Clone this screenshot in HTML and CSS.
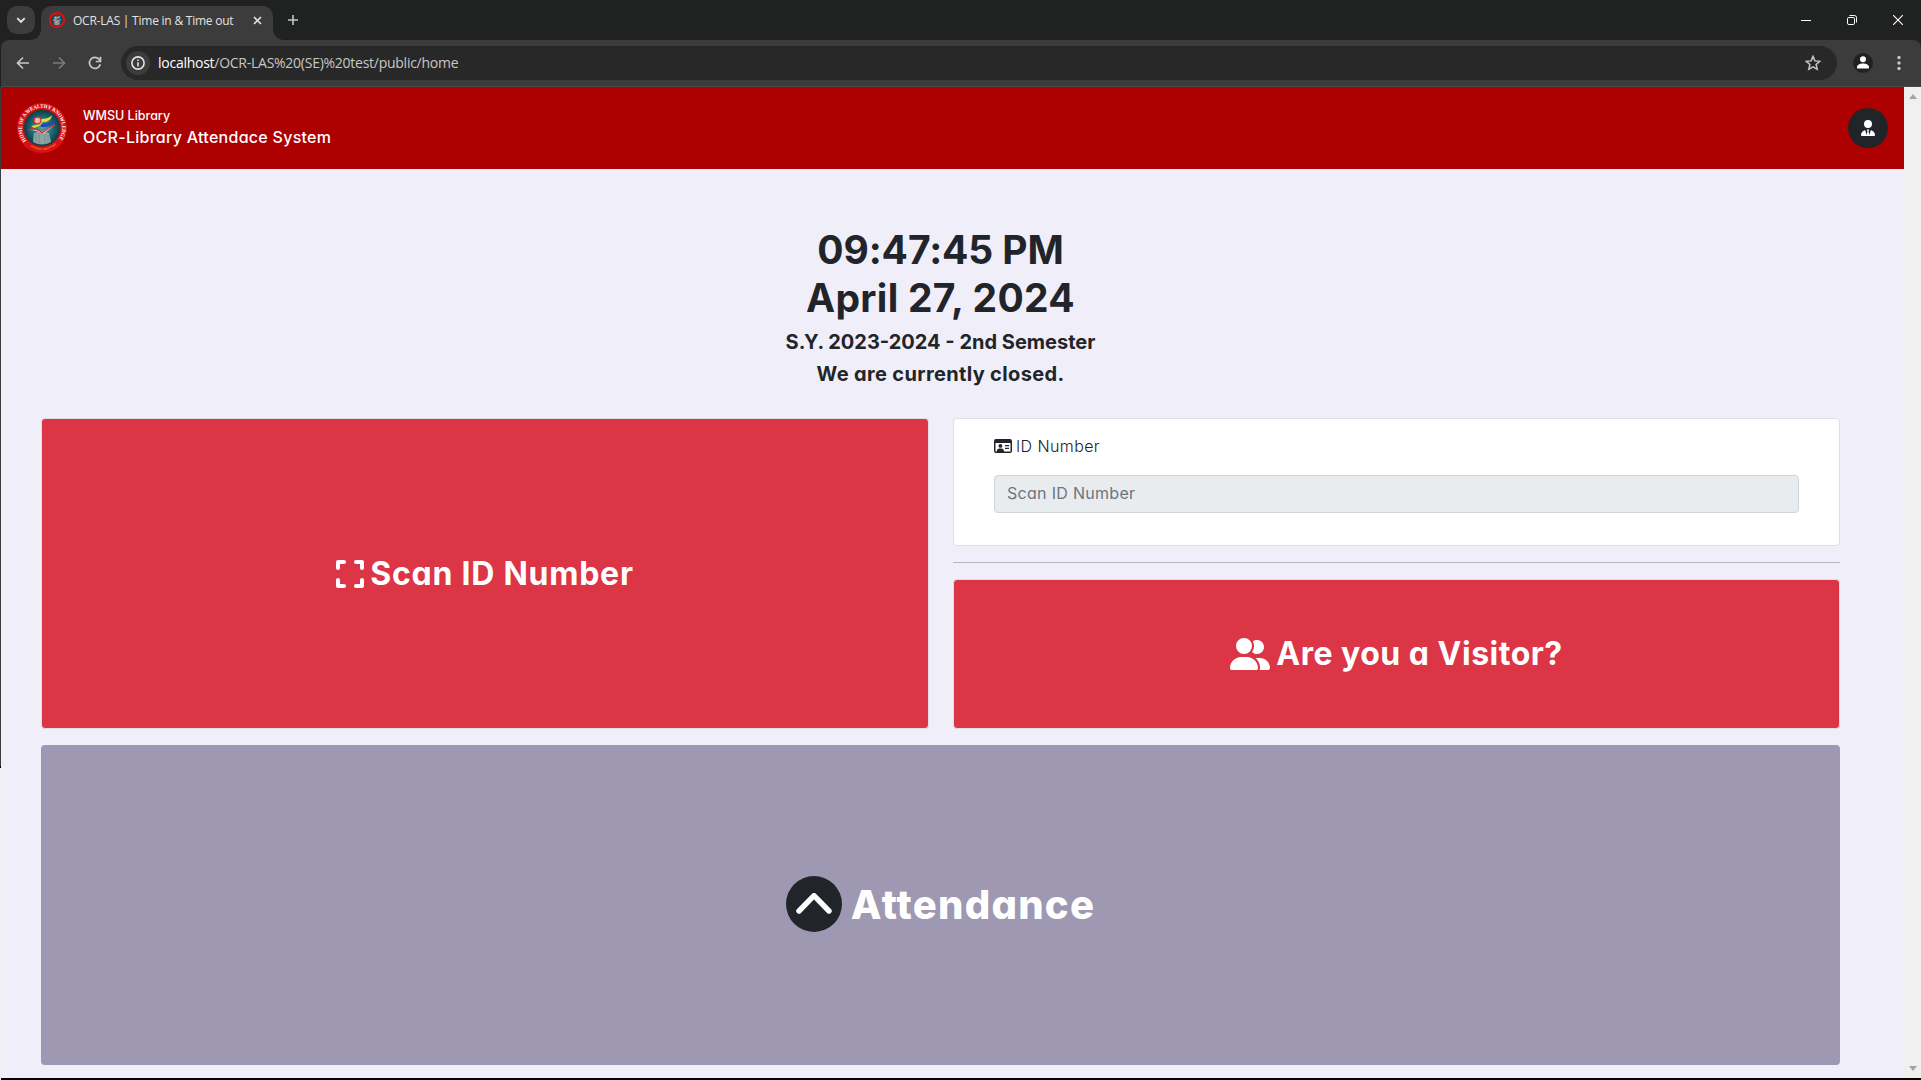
FILE: index.html
```html
<!DOCTYPE html>
<html lang="en">
<head>
<meta charset="utf-8">
<title>OCR-LAS | Time in &amp; Time out</title>
<link rel="stylesheet" href="styles.css">
</head>
<body>
<div class="browser">
  <div class="tabstrip">
    <div class="tab-search"><svg width="10" height="7" viewBox="0 0 10 7"><path d="M1.3 1.2 5 4.9l3.7-3.7" fill="none" stroke="#e3e3e3" stroke-width="1.9"/></svg></div>
    <div class="tab">
      <svg class="favicon" width="16" height="16" viewBox="0 0 50 50"><use href="#seal"/></svg>
      <span class="tab-title">OCR-LAS | Time in &amp; Time out</span>
      <svg class="tab-close" width="9" height="9" viewBox="0 0 9 9"><path d="m1 1 7 7M8 1 1 8" stroke="#e3e3e3" stroke-width="1.6"/></svg>
    </div>
    <svg class="new-tab" width="10" height="10" viewBox="0 0 10 10"><path d="M5 0v10M0 5h10" stroke="#c7c7c7" stroke-width="1.6"/></svg>
    <div class="window-buttons">
      <svg width="10" height="10" viewBox="0 0 10 10"><path d="M0 5.5h10" stroke="#fff"/></svg>
      <svg width="10" height="10" viewBox="0 0 10 10" fill="none" stroke="#fff"><rect x=".5" y="2.5" width="7" height="7" rx="1.3"/><path d="M2.5.5h5a2 2 0 0 1 2 2v5"/></svg>
      <svg width="10" height="10" viewBox="0 0 10 10"><path d="m0 0 10 10M10 0 0 10" stroke="#fff" stroke-width="1.1"/></svg>
    </div>
  </div>
  <div class="toolbar">
    <svg class="nav" width="14" height="14" viewBox="0 0 14 14"><path d="M13 7H2M7 1.5 1.5 7 7 12.5" fill="none" stroke="#c7c7c7" stroke-width="1.7"/></svg>
    <svg class="nav" width="14" height="14" viewBox="0 0 14 14"><path d="M1 7h11M7 1.5 12.5 7 7 12.5" fill="none" stroke="#7b7b7b" stroke-width="1.7"/></svg>
    <svg class="nav" width="14" height="14" viewBox="0 0 14 14"><path d="M12.3 8.3A5.5 5.5 0 1 1 11.2 3.4L12.5 5" fill="none" stroke="#c7c7c7" stroke-width="1.7"/><path d="M12.5.8v4.7H7.8" fill="none" stroke="#c7c7c7" stroke-width="1.7"/></svg>
    <div class="omnibox">
      <div class="site-info"><svg width="14" height="14" viewBox="0 0 14 14"><circle cx="7" cy="7" r="6.1" fill="none" stroke="#e3e3e3" stroke-width="1.6"/><path d="M7 6.2v4.2M7 3.5v1.5" stroke="#e3e3e3" stroke-width="1.6"/></svg></div>
      <span class="url"><b>localhost</b>/OCR-LAS%20(SE)%20test/public/home</span>
      <svg class="star" width="16" height="16" viewBox="0 0 16 16"><path d="m8 1.4 1.9 4.5 4.9.4-3.7 3.2 1.1 4.8L8 11.8l-4.2 2.5 1.1-4.8L1.2 6.3l4.9-.4z" fill="none" stroke="#c7c7c7" stroke-width="1.5"/></svg>
    </div>
    <div class="profile"><svg width="12" height="13" viewBox="0 0 12 13" fill="#fff"><circle cx="6" cy="3.2" r="3"/><path d="M0 12.500v-1.300C0 8.800 3 7.600 6 7.600s6 1.200 6 3.600v1.300z"/></svg></div>
    <svg class="menu" width="4" height="16" viewBox="0 0 4 16" fill="#c7c7c7"><circle cx="2" cy="2.5" r="1.7"/><circle cx="2" cy="8" r="1.7"/><circle cx="2" cy="13.5" r="1.7"/></svg>
  </div>
</div>

<div class="viewport">
  <div class="edge"></div>
  <div class="page">
    <header class="site-header">
      <svg class="logo" width="50" height="50" viewBox="0 0 50 50">
        <defs>
          <radialGradient id="sea"><stop offset="0" stop-color="#4f9fa5"/><stop offset=".6" stop-color="#1d6874"/><stop offset="1" stop-color="#0b3b48"/></radialGradient>
          <path id="ring" d="M9.400 37.600A20.100 20.100 0 1 1 40.600 37.600"/>
          <path id="ring-low" d="M10.500 41.200A22 22 0 0 0 39.500 41.200"/>
          <g id="seal">
            <circle cx="25" cy="25" r="25" fill="#dc1013"/>
            <circle cx="25" cy="25" r="18.3" fill="url(#sea)" stroke="#7c2228" stroke-width=".8"/>
            <path d="M17 30q8-3 15 0l2 9q-9 5-18 0z" fill="#8fa3a2"/>
            <path d="M19 31v8M22 30v11M28 31v10M31 32v7" stroke="#6f8587" stroke-width=".8"/>
            <path d="M24 16q8 0 11-4-1 8-11 7z" fill="#e6dc37"/>
            <path d="M23 20q9 2 16-4-4 9-15 8z" fill="#2346b8"/>
            <path d="M14 23q10-2 12-6 0 6-9 8z" fill="#d9d53c"/>
            <path d="M12 27q8-3 13 2 5-4 13-7l-12 9q-6-4-14-4z" fill="#e9ddd9"/>
            <path d="M11 27q9-3 14 3 6-5 13-8" fill="none" stroke="#d92d2d" stroke-width="1.3"/>
            <circle cx="20.5" cy="17.5" r="3.4" fill="#eeb5b3" stroke="#d32b34" stroke-width="1.2"/>
          </g>
        </defs>
        <use href="#seal"/>
        <text class="seal-text"><textPath href="#ring" textLength="88" lengthAdjust="spacingAndGlyphs">HOME OF A WEALTHY KNOWLEDGE</textPath></text>
        <text class="seal-motto"><textPath href="#ring-low" startOffset="4">Scribimus Opus Populus</textPath></text>
      </svg>
      <div class="brand">
        <span class="brand-small">WMSU Library</span>
        <span class="brand-name">OCR-Library Attendace System</span>
      </div>
      <div class="account"><svg width="14" height="16" viewBox="0 0 448 512" fill="#fff"><path d="M96 128a128 128 0 1 0 256 0A128 128 0 1 0 96 128zm94.500 200.200l18.600 31L175.800 483.100l-36-146.900c-2-8.100-9.800-13.400-17.900-11.300C51.900 342.400 0 405.800 0 481.300c0 17 13.800 30.700 30.700 30.700H417.300c17 0 30.700-13.800 30.700-30.700c0-75.500-51.900-138.900-121.900-156.400c-8.100-2-15.900 3.300-17.900 11.300l-36 146.900L238.900 359.200l18.600-31c6.400-10.700-1.300-24.200-13.700-24.200H204.300c-12.400 0-20.100 13.600-13.700 24.200z"/></svg></div>
    </header>
    <main class="content">
      <div class="status">
        <h1 class="clock">09:47:45 PM</h1>
        <h1 class="clock date">April 27, 2024</h1>
        <h2 class="term">S.Y. 2023-2024 - 2nd Semester</h2>
        <h2 class="notice">We are currently closed.</h2>
      </div>
      <div class="panels">
        <div class="card action scan">
          <svg width="28" height="32" viewBox="0 0 448 512" fill="#fff"><path d="M32 32C14.300 32 0 46.300 0 64v96c0 17.700 14.300 32 32 32s32-14.300 32-32V96h64c17.700 0 32-14.300 32-32s-14.300-32-32-32H32zM64 352c0-17.700-14.300-32-32-32s-32 14.300-32 32v96c0 17.700 14.300 32 32 32h96c17.700 0 32-14.300 32-32s-14.300-32-32-32H64V352zM320 32c-17.700 0-32 14.300-32 32s14.300 32 32 32h64v64c0 17.700 14.300 32 32 32s32-14.300 32-32V64c0-17.700-14.300-32-32-32H320zM448 352c0-17.700-14.300-32-32-32s-32 14.300-32 32v64H320c-17.700 0-32 14.300-32 32s14.300 32 32 32h96c17.700 0 32-14.300 32-32V352z"/></svg>
          <span>Scan ID Number</span>
        </div>
        <div class="side">
          <div class="card entry">
            <label class="entry-label" for="idnum">
              <svg width="18" height="14" viewBox="0 0 18 14" fill="#212529"><path fill-rule="evenodd" d="M2 0h14a2 2 0 0 1 2 2v10a2 2 0 0 1-2 2H2a2 2 0 0 1-2-2V2a2 2 0 0 1 2-2zM1.500 4v8.500h1.300c0-2 1-3 2.500-3H7.500c1.500 0 2.500 1 2.500 3h6.500V4z"/><circle cx="6.4" cy="6.9" r="1.9"/><path d="M11 6h4v1.200h-4zM11 8.800h4V10h-4z"/></svg>
              <span>ID Number</span>
            </label>
            <input class="entry-input" id="idnum" type="text" placeholder="Scan ID Number" disabled>
          </div>
          <hr class="divider">
          <div class="card action visitor">
            <svg width="40" height="32" viewBox="0 0 640 512" fill="#fff"><path d="M96 128a128 128 0 1 1 256 0A128 128 0 1 1 96 128zM0 482.300C0 383.800 79.800 304 178.300 304h91.400C368.200 304 448 383.800 448 482.300c0 16.400-13.300 29.700-29.700 29.700H29.700C13.300 512 0 498.700 0 482.300zM609.300 512H471.400c5.400-9.400 8.600-20.300 8.600-32v-8c0-60.700-27.100-115.200-69.800-151.800c2.400-.1 4.700-.2 7.100-.2h61.400C567.800 320 640 392.200 640 481.300c0 17-13.800 30.700-30.700 30.700zM432 256c-31 0-59-12.600-79.300-32.900C372.400 196.500 384 163.600 384 128c0-26.800-6.600-52.100-18.300-74.300C384.300 40.100 407.200 32 432 32c61.900 0 112 50.100 112 112s-50.100 112-112 112z"/></svg>
            <span>Are you a Visitor?</span>
          </div>
        </div>
      </div>
      <div class="attendance">
        <div class="round"><svg width="36" height="22" viewBox="0 0 36 22"><path d="M3 18 18 2.700l15 15.300" fill="none" stroke="#fff" stroke-width="5.4" stroke-linecap="round" stroke-linejoin="round"/></svg></div>
        <span>Attendance</span>
      </div>
    </main>
  </div>
  <div class="scrollbar">
    <svg width="8" height="5" viewBox="0 0 8 5"><path d="m0 5 4-5 4 5z" fill="#a3a3a3"/></svg>
    <svg width="8" height="5" viewBox="0 0 8 5"><path d="m0 0 4 5 4-5z" fill="#a3a3a3"/></svg>
  </div>
</div>
<div class="taskline"></div>
</body>
</html>
```
FILE: styles.css
```css
* { box-sizing: border-box; }
html, body { margin: 0; height: 100%; overflow: hidden; }
body {
  display: flex;
  flex-direction: column;
  background: #f0eef8;
  color: #212529;
  font-family: Inter, "Open Sans", sans-serif;
  font-feature-settings: "cv11";
}
svg { display: block; flex: none; }
span { white-space: nowrap; }

/* Browser frame */
.browser {
  height: 87px;
  flex: none;
  background: #202221;
  font-family: "Open Sans", "Noto Sans", sans-serif;
  font-feature-settings: normal;
}
.tabstrip { display: flex; align-items: center; height: 40px; padding-left: 7px; }
.tab-search {
  display: flex; align-items: center; justify-content: center;
  width: 28px; height: 28px; border-radius: 10px; background: #3c3c3c;
}
.tab {
  position: relative;
  display: flex; align-items: center; align-self: flex-end;
  width: 232px; height: 34px; margin-left: 6px; padding: 0 11px 6px 8px;
  border-radius: 10px 10px 0 0; background: #3c3c3c;
}
.tab::before, .tab::after {
  content: ""; position: absolute; bottom: 0; width: 10px; height: 10px;
}
.tab::before { left: -10px; background: radial-gradient(circle at 0 0, transparent 9.5px, #3c3c3c 10px); }
.tab::after { right: -10px; background: radial-gradient(circle at 100% 0, transparent 9.5px, #3c3c3c 10px); }
.tab-title { margin-left: 8px; color: #e3e3e3; font-size: 12px; line-height: 16px; letter-spacing: -.23px; padding-top: 1px; }
.tab-close { margin-left: auto; }
.new-tab { margin-left: 15px; }
.window-buttons { display: flex; gap: 36px; margin-left: auto; padding-right: 18px; }
.toolbar {
  display: flex; align-items: center;
  height: 47px; margin-left: 1px; padding: 0 20px 1px 15px;
  border-bottom: 1px solid #4a4a4a; border-radius: 8px 8px 0 0; background: #3c3c3c;
}
.nav { margin-right: 22px; }
.omnibox {
  display: flex; align-items: center; flex: 1;
  height: 34px; margin-left: -3px; margin-right: 16px; padding: 0 16px 0 5px;
  border-radius: 17px; background: #282828;
}
.site-info {
  display: flex; align-items: center; justify-content: center;
  width: 24px; height: 24px; border-radius: 50%; background: #3c3c3c;
}
.url { margin-left: 8px; padding-top: 1px; color: #c7c7c7; font-size: 14px; line-height: 20px; letter-spacing: -.26px; }
.url b { color: #fff; font-weight: 400; }
.star { margin-left: auto; }
.profile {
  display: flex; align-items: center; justify-content: center;
  width: 20px; height: 20px; border-radius: 50%; background: #202221;
}
.menu { margin-left: 24px; }

/* Page frame */
.viewport { display: flex; flex: 1; min-height: 0; }
.edge { width: 1px; background: linear-gradient(#3c3c3c 679px, #000 679px 681px, #f0f0f0 681px); }
.page { display: flex; flex-direction: column; flex: 1; }
.scrollbar {
  display: flex; flex-direction: column; align-items: center; justify-content: space-between;
  width: 17px; padding: 7px 0; background: #f0f0f0;
}
.taskline { height: 2px; margin-left: 1px; background: #000; }

/* Header */
.site-header {
  display: flex; align-items: center; flex: none;
  height: 82px; padding: 0 16px; background: #ad0000; color: #fff;
}
.seal-text { fill: #fff; font: 700 5.4px "Liberation Serif", serif; }
.seal-motto { fill: #f2c230; font: italic 3px "Liberation Serif", serif; }
.brand { display: flex; flex-direction: column; margin-left: 16px; padding-bottom: 3px; font-weight: 450; }
.brand-small { padding-top: 1px; font-size: 12.5px; line-height: 20px; }
.brand-name { font-size: 16px; line-height: 22px; letter-spacing: .28px; }
.account {
  display: flex; align-items: center; justify-content: center;
  width: 40px; height: 40px; margin-left: auto; border-radius: 50%; background: #212529;
}

/* Content */
.content { display: flex; flex-direction: column; flex: 1; padding: 57px 64px 13px 40px; }
.status { height: 192px; text-align: center; }
.clock, .term, .notice { margin: 0; font-weight: 700; }
.clock { font-size: 39px; line-height: 48px; letter-spacing: -.1px; }
.date { letter-spacing: .28px; }
.term, .notice { font-size: 20px; line-height: 24px; }
.term { margin-top: 8px; }
.notice { margin-top: 8px; letter-spacing: .35px; }
.panels { display: grid; grid-template-columns: 888px 1fr; gap: 24px; height: 311px; }
.card { border: 1px solid #dfdfe3; border-radius: 4px; background: #fff; }
.action {
  display: flex; align-items: center; justify-content: center; gap: 6px;
  background: #dc3545; color: #fff; font-size: 32px; font-weight: 750; line-height: 38px;
}
.action span { padding-top: 1px; }
.scan { letter-spacing: .75px; }
.side { display: flex; flex-direction: column; }
.entry { height: 128px; padding: 14px 40px; }
.entry-label { display: flex; align-items: center; gap: 4px; height: 26px; font-size: 16px; font-weight: 350; letter-spacing: .4px; }
.entry-input {
  display: block; width: 100%; height: 38px; margin-top: 16px; padding: 0 12px 2px;
  border: 1px solid #ced4da; border-radius: 4px; background: #e9ecef;
  font: inherit; font-size: 16px; letter-spacing: .3px;
}
.entry-input::placeholder { color: #6c757d; opacity: 1; }
.divider { width: 100%; height: 1px; margin: 16px 0; border: 0; background: #b8b7bf; }
.visitor { flex: 1; padding-bottom: 1px; letter-spacing: .5px; }
.attendance {
  display: flex; align-items: center; justify-content: center; gap: 9px;
  height: 320px; margin-top: 16px; padding-bottom: 2px; border-radius: 4px;
  background: #9e98b2; color: #fff; font-size: 40px; font-weight: 850; letter-spacing: 1.25px;
}
.round {
  display: flex; align-items: center; justify-content: center;
  width: 56px; height: 56px; border-radius: 50%; background: #212529;
}
```
